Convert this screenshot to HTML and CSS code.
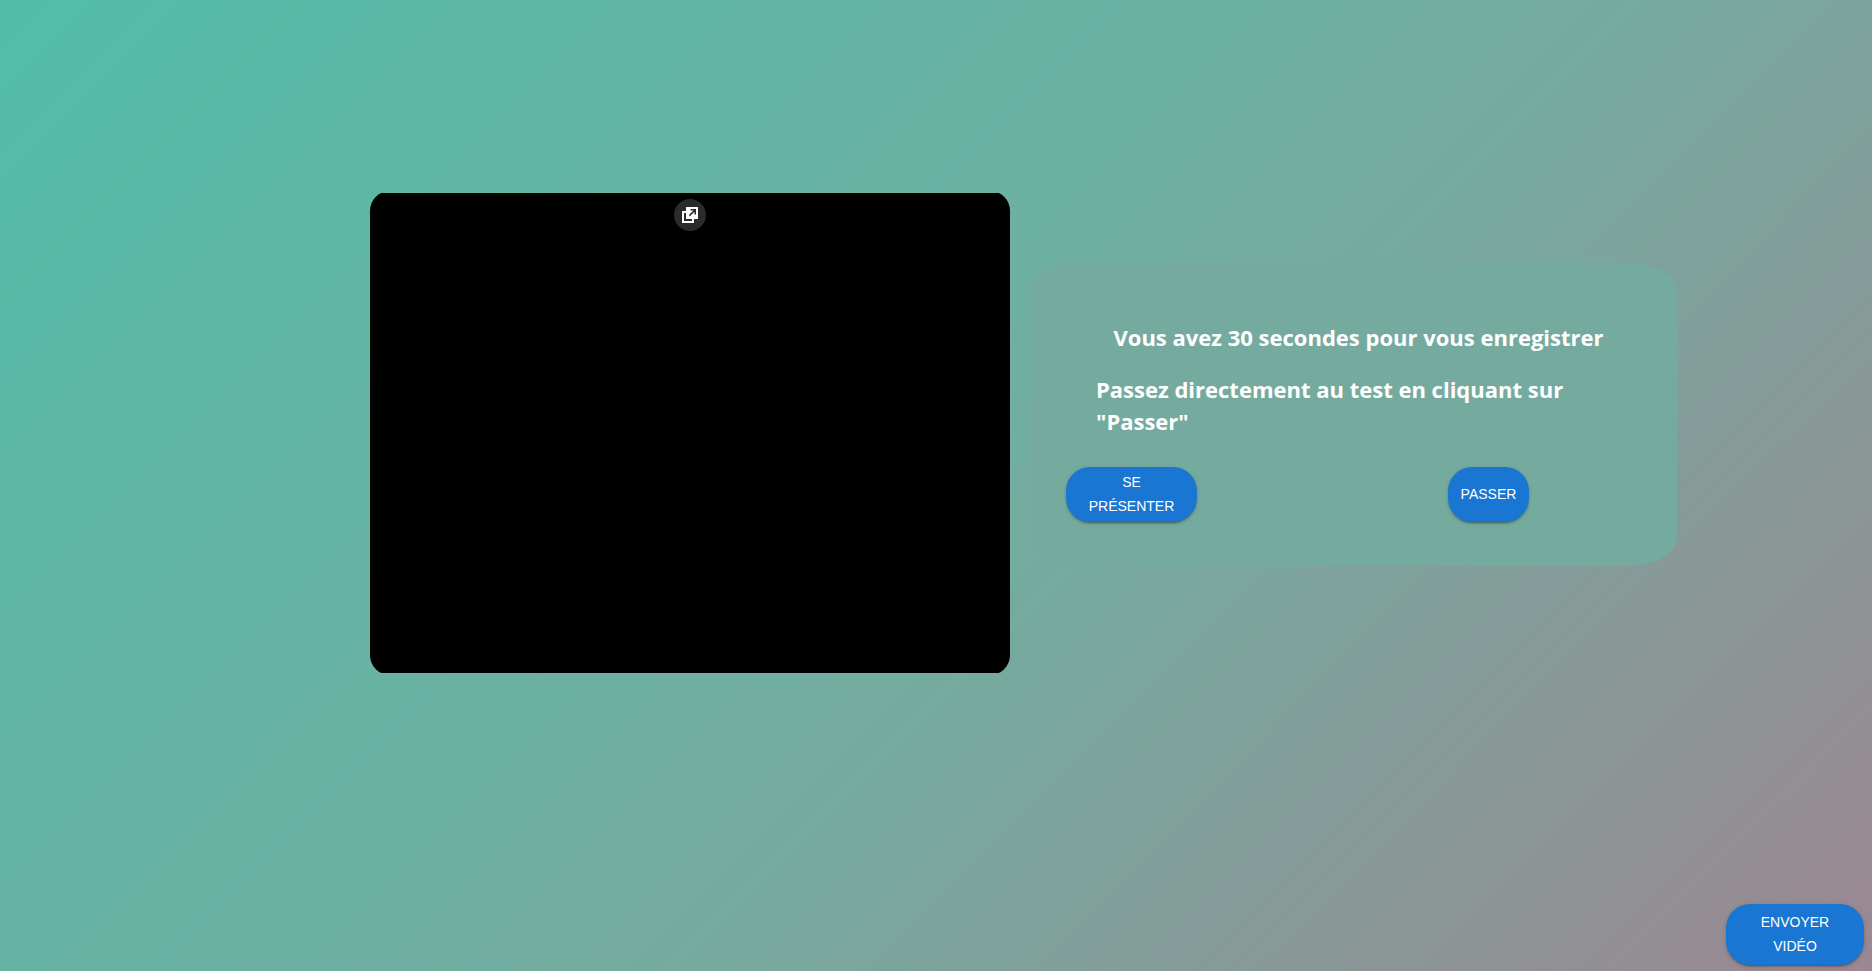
FILE: index.html
```html
<!DOCTYPE html>
<html lang="fr">
<head>
<meta charset="utf-8">
<title>Présentation vidéo</title>
<link rel="stylesheet" href="styles.css">
</head>
<body>
<main class="stage">
  <section class="recorder" aria-label="Enregistrement vidéo">
    <div class="screen">
      <button class="popout" type="button" aria-label="Image dans l'image">
        <svg width="16" height="16" viewBox="0 0 16 16" aria-hidden="true">
          <path fill="#fff" fill-rule="evenodd" d="M4 0H16V12H12V16H0V4H4ZM4 6H2V14H10V12H4Z"/>
          <path fill="none" stroke="#2b2b2b" stroke-width="1.6" d="M7.4 8.6L13 3M8.6 2.8H13.2V7.4"/>
        </svg>
      </button>
    </div>
  </section>
  <section class="card">
    <h2 class="title title-center">Vous avez 30 secondes pour vous enregistrer</h2>
    <h2 class="title">Passez directement au test en cliquant sur "Passer"</h2>
    <div class="actions">
      <button class="btn btn-present" type="button">Se présenter</button>
      <button class="btn btn-skip" type="button">Passer</button>
    </div>
  </section>
</main>
<footer class="footer">
  <button class="btn btn-send" type="button">Envoyer vidéo</button>
</footer>
</body>
</html>
```
FILE: styles.css
```css
* { box-sizing: border-box; }

body {
  margin: 0;
  min-height: 100vh;
  display: flex;
  flex-direction: column;
  justify-content: space-between;
  font-family: "Segoe UI", "Open Sans", "Noto Sans", sans-serif;
  background: linear-gradient(135deg, #53bda8 0%, #6bb1a2 42%, #75ab9f 57%, #9b8791 100%);
}

.stage {
  display: flex;
  justify-content: center;
  align-items: flex-start;
  gap: 20px;
  padding: 191px 195px 0 370px;
}

.recorder {
  flex: 0 0 640px;
  padding: 2px 0;
  border-radius: 20px;
  overflow: hidden;
}

.screen {
  aspect-ratio: 4 / 3;
  display: flex;
  justify-content: center;
  align-items: flex-start;
  padding-top: 6px;
  background: #000;
}

.popout {
  width: 32px;
  height: 32px;
  display: grid;
  place-items: center;
  padding: 0;
  border: 0;
  border-radius: 50%;
  background: #2b2b2b;
}

.popout svg { display: block; }

.card {
  flex: 1;
  margin-top: 71px;
  padding: 59px 36px 44px;
  border-radius: 50px / 28px;
  background: #75ab9f;
}

.title {
  margin: 0 30px 20px;
  color: #fff;
  font-size: 22px;
  line-height: 32px;
  font-weight: 700;
}

.title-center {
  padding-left: 10px;
  text-align: center;
}

.actions {
  display: flex;
  justify-content: space-between;
  padding-top: 10px;
  padding-right: 112px;
}

.btn {
  border: 0;
  border-radius: 24px;
  background: #1976d2;
  color: #fff;
  font: 14px/24px "Liberation Sans", Arial, sans-serif;
  text-transform: uppercase;
  box-shadow: 0 3px 1px -2px rgba(0, 0, 0, .2), 0 2px 2px rgba(0, 0, 0, .14), 0 1px 5px rgba(0, 0, 0, .12);
}

.btn-present {
  width: 131px;
  padding: 3px 16px 4px;
}

.btn-skip {
  width: 81px;
  padding: 3px 8px 4px;
}

.footer {
  display: flex;
  justify-content: flex-end;
  padding: 0 8px 6px;
}

.btn-send {
  width: 138px;
  padding: 6px 24px 7px;
}
```
